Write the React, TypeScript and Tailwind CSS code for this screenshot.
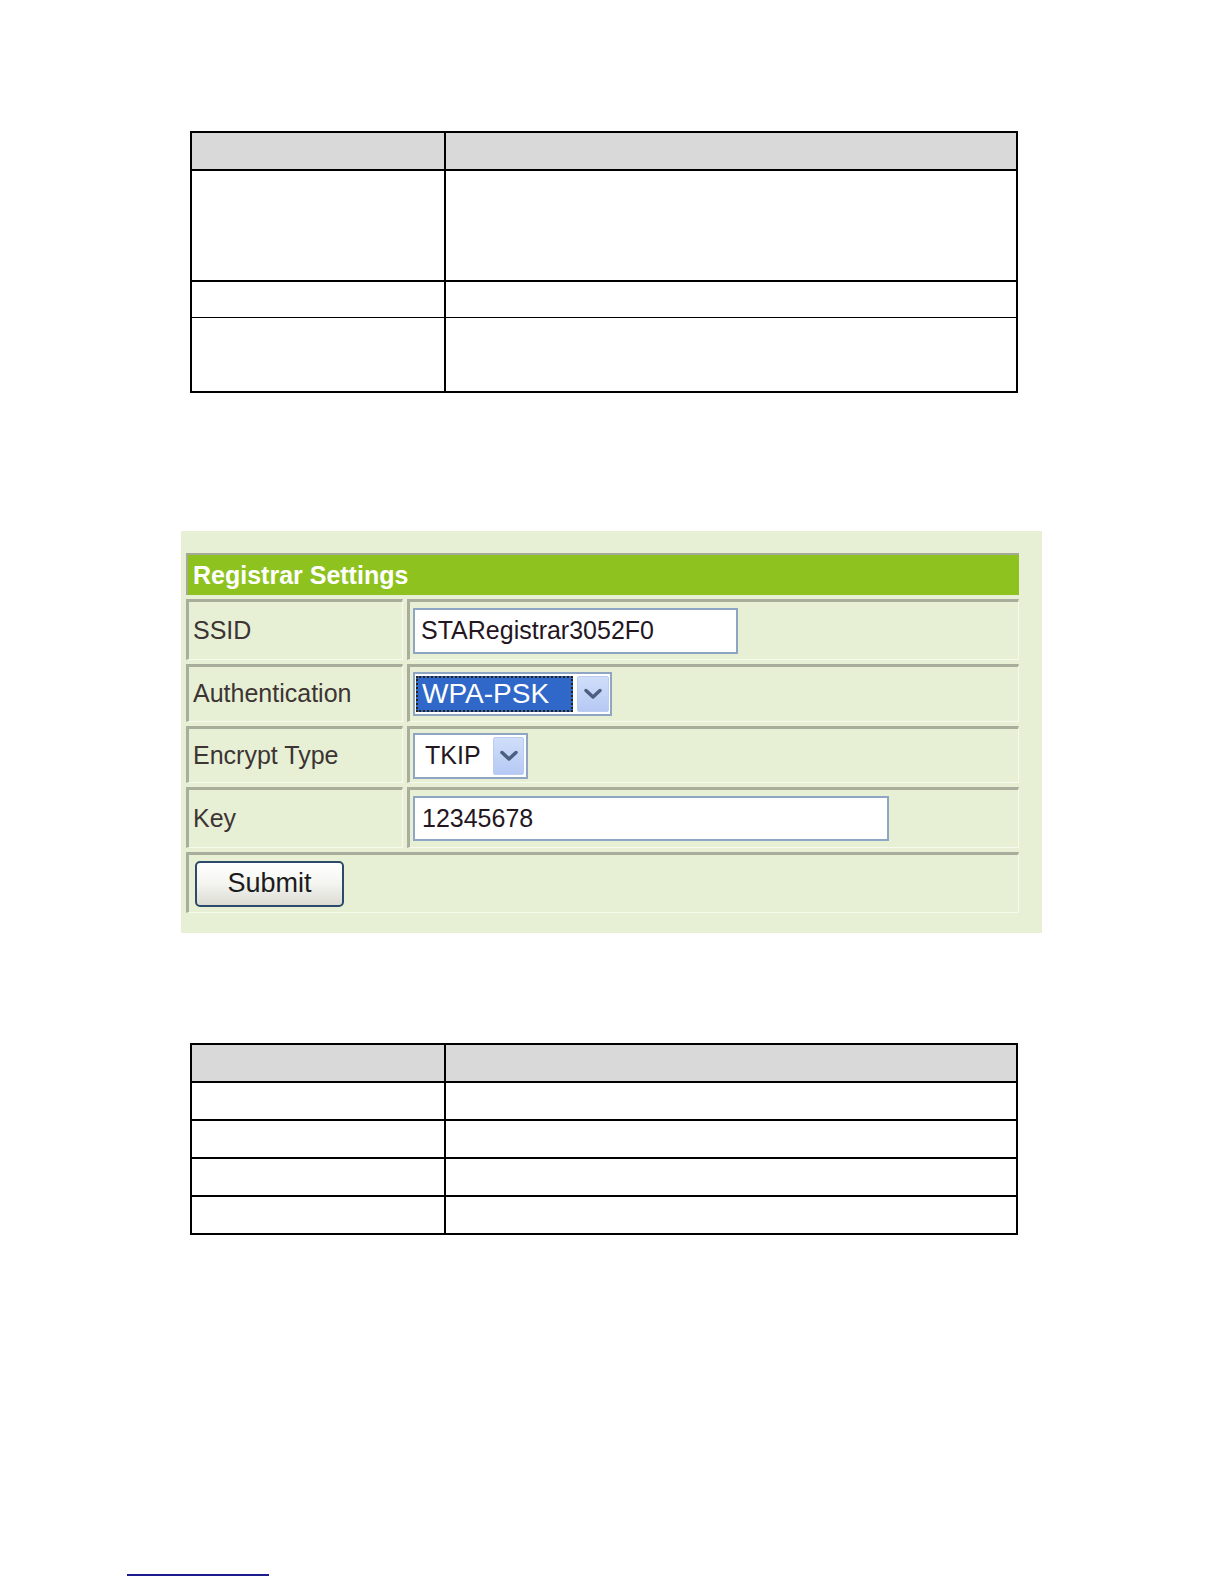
import React from "react";

function Chevron() {
  return (
    <svg width="20" height="12" viewBox="0 0 20 12">
      <path d="M3 2.5 L10 9 L17 2.5" fill="none" stroke="#4b5f82" strokeWidth="3.5" strokeLinecap="round" strokeLinejoin="round" />
    </svg>
  );
}

function DocTable({ rows, headH }: { rows: { h: string; thin?: boolean }[]; headH: string }) {
  return (
    <div className="w-[828px] border-2 border-black">
      <div className={`flex ${headH} bg-[#d9d9d9]`}>
        <div className="w-[254px] border-r-2 border-black"></div>
        <div className="flex-1"></div>
      </div>
      {rows.map((r, i) => (
        <div key={i} className={`flex ${r.h} ${r.thin ? "border-t" : "border-t-2"} border-black`}>
          <div className="w-[254px] border-r-2 border-black"></div>
          <div className="flex-1"></div>
        </div>
      ))}
    </div>
  );
}

function Row({ label, h, children }: { label: string; h: string; children: React.ReactNode }) {
  return (
    <div className={`flex gap-[4px] ${h}`}>
      <div className="flex w-[217px] items-center border-t-[3px] border-l-[3px] border-b border-r border-t-[#a9ae9c] border-l-[#a9ae9c] border-b-[#f6f9ee] border-r-[#f6f9ee] pl-[4px] text-[25px] text-[#3d3434]">
        {label}
      </div>
      <div className="flex flex-1 items-center border-t-[3px] border-l-[3px] border-b border-r border-t-[#a9ae9c] border-l-[#a9ae9c] border-b-[#f6f9ee] border-r-[#f6f9ee] pl-[3px]">
        {children}
      </div>
    </div>
  );
}

export default function App() {
  return (
    <div className="min-h-[1584px] w-[1224px] bg-white font-['Liberation_Sans',Arial,sans-serif]">
      <div className="pt-[131px] pl-[190px]">
        <DocTable
          headH="h-[36px]"
          rows={[{ h: "h-[111px]" }, { h: "h-[37px]" }, { h: "h-[74px]", thin: true }]}
        />
      </div>

      <div className="mt-[138px] ml-[181px] h-[402px] w-[861px] bg-[#e7f0d5] pt-[22px] pl-[5px]">
        <div className="flex w-[833px] flex-col gap-[4px]">
          <div className="flex h-[42px] items-center border-t-2 border-l-2 border-[#a4a896] bg-[#8ec31f] pl-[5px] pt-[2px] text-[25px] font-bold text-white">
            Registrar Settings
          </div>

          <Row label="SSID" h="h-[61px]">
            <div className="flex h-[46px] w-[325px] items-center border-2 border-[#8ea6c4] bg-white pl-[6px] text-[25px] text-[#24161f]">
              STARegistrar3052F0
            </div>
          </Row>

          <Row label="Authentication" h="h-[58px]">
            <div className="flex h-[44px] w-[199px] items-center border-2 border-[#8ea6c4] bg-white pl-[1px]">
              <div className="flex h-[36px] w-[157px] items-center border-2 border-dotted border-[#2a2414] bg-[#2f68c8] pl-[4px] text-[28px] text-white">
                WPA-PSK
              </div>
              <div className="ml-[4px] flex h-[36px] w-[32px] items-center justify-center rounded-[2px] border border-[#bccdf2] bg-gradient-to-b from-[#d0def9] to-[#b6c9f4]">
                <Chevron />
              </div>
            </div>
          </Row>

          <Row label="Encrypt Type" h="h-[57px]">
            <div className="flex h-[46px] w-[115px] items-center border-2 border-[#8ea6c4] bg-white pl-[10px]">
              <span className="text-[25px] text-[#24161f]">TKIP</span>
              <div className="ml-auto mr-[2px] flex h-[38px] w-[31px] items-center justify-center rounded-[2px] border border-[#bccdf2] bg-gradient-to-b from-[#d0def9] to-[#b6c9f4]">
                <Chevron />
              </div>
            </div>
          </Row>

          <Row label="Key" h="h-[61px]">
            <div className="flex h-[45px] w-[476px] items-center border-2 border-[#8ea6c4] bg-white pl-[7px] text-[25px] text-[#24161f]">
              12345678
            </div>
          </Row>

          <div className="flex h-[61px] items-center border-t-[3px] border-l-[3px] border-b border-r border-t-[#a9ae9c] border-l-[#a9ae9c] border-b-[#f6f9ee] border-r-[#f6f9ee] pl-[6px]">
            <button className="flex h-[46px] w-[149px] items-center justify-center rounded-[5px] border-2 border-[#2d4a6a] bg-gradient-to-b from-white via-[#f4f4f0] to-[#dcdcd4] text-[27px] text-[#1c1c1c]">
              Submit
            </button>
          </div>
        </div>
      </div>

      <div className="mt-[110px] pl-[190px]">
        <DocTable
          headH="h-[36px]"
          rows={[{ h: "h-[38px]" }, { h: "h-[38px]" }, { h: "h-[38px]" }, { h: "h-[38px]" }]}
        />
      </div>

      <div className="mt-[339px] ml-[127px] h-[2px] w-[142px] bg-[#1c1c8c]"></div>
    </div>
  );
}
